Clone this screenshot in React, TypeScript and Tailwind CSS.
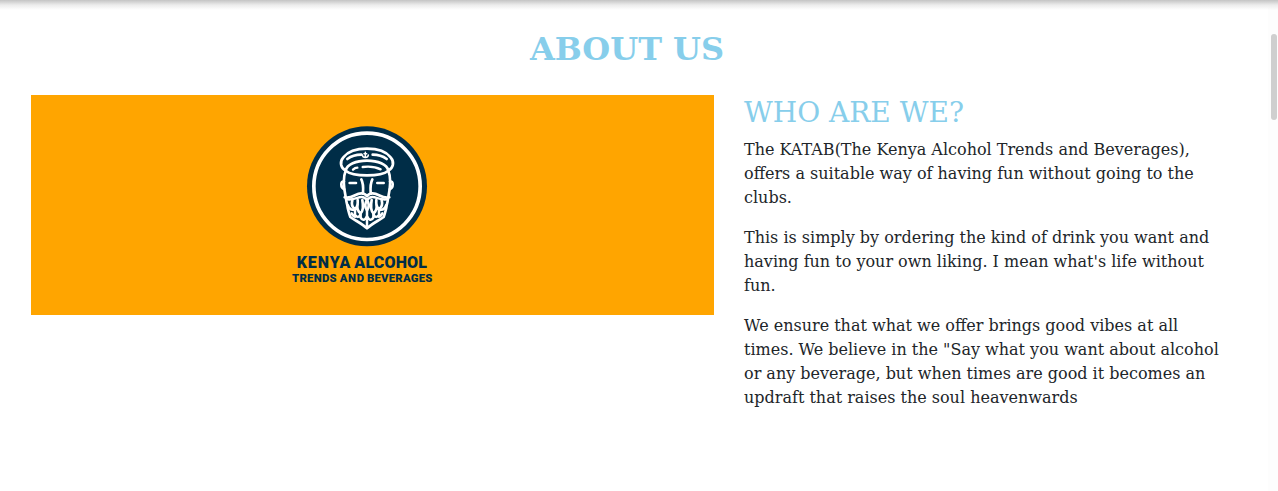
import React from "react";

function Logo() {
  return (
    <svg viewBox="0 0 465 510" className="h-[170px] w-[155px]" role="img" aria-label="Kenya Alcohol Trends and Beverages">
      <circle cx="246" cy="199" r="180" fill="#002d47" />
      <circle cx="246" cy="199" r="159.500" fill="none" stroke="#fff" strokeWidth="11" />
      <g transform="translate(45 0)" fill="none" stroke="#fff" strokeWidth="8" strokeLinecap="round" strokeLinejoin="round">
        <path d="M137 152C122 144 118 126 130 112C144 94 173 86 201 86C229 86 258 94 272 112C284 126 280 144 265 152" />
        <path d="M137 152C141 133 168 122 201 122C234 122 261 133 265 152C254 161 230 166 201 166C172 166 148 161 137 152Z" />
        <path d="M142 117C154 108 170 104 184 104M218 104C232 104 248 108 260 117" />
        <path d="M159 149C164 144 168 143 172 143M188 141C205 139 228 141 242 148" strokeWidth="7" />
        <path d="M196 97V112M192 101H200M187 105C188 115 204 115 205 105" strokeWidth="4.500" />
        <path d="M137 152C129 171 131 202 137 230C138 238 140 249 142 256C143 267 147 279 151 291C166 302 187 311 201 325C215 311 236 302 251 291C255 279 259 267 260 256C262 249 264 238 265 230C271 202 273 171 265 152" />
        <path d="M132 185C121 182 121 203 133 208M270 185C281 182 281 203 269 208" />
        <path d="M149 189H168M232 189H251" />
        <path d="M184 178C190 190 190 204 189 217M217 178C211 190 211 204 212 217" />
        <path d="M134 232C155 238 166 220 184 220C193 220 198 224 201 229C204 224 209 220 218 220C236 220 247 238 268 232" />
        <path d="M142 238C160 241 173 231 185 231C192 231 197 235 201 241C205 235 210 231 217 231C229 231 242 241 260 238" strokeWidth="7" />
        <path d="M157 241C153 254 160 264 165 268C171 263 174 251 173 240M173 252C170 266 176 276 182 280C189 273 190 257 187 240M201 240C194 251 195 263 201 271C207 263 208 251 201 240M215 240C212 257 213 273 220 280C226 276 232 266 229 252M229 240C228 251 231 263 237 268C242 264 249 254 245 241" strokeWidth="8" />
        <path d="M144 256C147 265 152 272 165 268V284C171 293 178 294 182 280V293C188 304 196 300 201 288V318M258 256C255 265 250 272 237 268V284C231 293 224 294 220 280V293C214 304 206 300 201 288V271M155 280C161 291 165 291 169 289M247 280C241 291 237 291 233 289" strokeWidth="7.500" />
      </g>
      <g fill="#002d47" className="font-['Roboto',sans-serif] font-black">
        <text y="445" fontSize="48">
          <tspan x="35" textLength="161">KENYA</tspan>{" "}
          <tspan x="208" textLength="218">ALCOHOL</tspan>
        </text>
        <text y="486" fontSize="34">
          <tspan x="21" textLength="134">TRENDS</tspan>{" "}
          <tspan x="164" textLength="73">AND</tspan>{" "}
          <tspan x="246" textLength="196">BEVERAGES</tspan>
        </text>
      </g>
    </svg>
  );
}

export default function App() {
  return (
    <div className="flex h-[491px] overflow-hidden bg-white font-['DejaVu_Serif',serif] text-[#212529]">
      <section className="min-w-0 flex-1">
        <div className="h-[10px] bg-linear-to-b from-[#c4c4c4] via-[#ececec] to-white" />
        <h2 className="mt-5 w-[1254px] text-center text-[32px] leading-[38px] font-bold text-[#87ceeb]">ABOUT US</h2>
        <div className="mt-[27px] flex items-start gap-[30px] pl-[31px]">
          <div className="flex h-[220px] w-[683px] shrink-0 bg-[#ffa500] pt-[25px] pl-[254px]">
            <Logo />
          </div>
          <div className="w-[482px] shrink-0 pt-px">
            <h3 className="mb-2 text-[28px] leading-[34px] text-[#87ceeb]">WHO ARE WE?</h3>
            <div className="space-y-4 text-base leading-6">
              <p>The KATAB(The Kenya Alcohol Trends and Beverages), offers a suitable way of having fun without going to the clubs.</p>
              <p>This is simply by ordering the kind of drink you want and having fun to your own liking. I mean what's life without fun.</p>
              <p>We ensure that what we offer brings good vibes at all times. We believe in the "Say what you want about alcohol or any beverage, but when times are good it becomes an updraft that raises the soul heavenwards</p>
            </div>
          </div>
        </div>
      </section>
      <div className="w-[10px] shrink-0 bg-[#fdfdfd]">
        <div className="h-[10px] bg-linear-to-b from-[#c4c4c4] via-[#ececec] to-[#fdfdfd]" />
        <div className="mt-6 ml-[3px] h-[86px] w-[6px] rounded-full bg-[#cfcfcf]" />
      </div>
    </div>
  );
}
